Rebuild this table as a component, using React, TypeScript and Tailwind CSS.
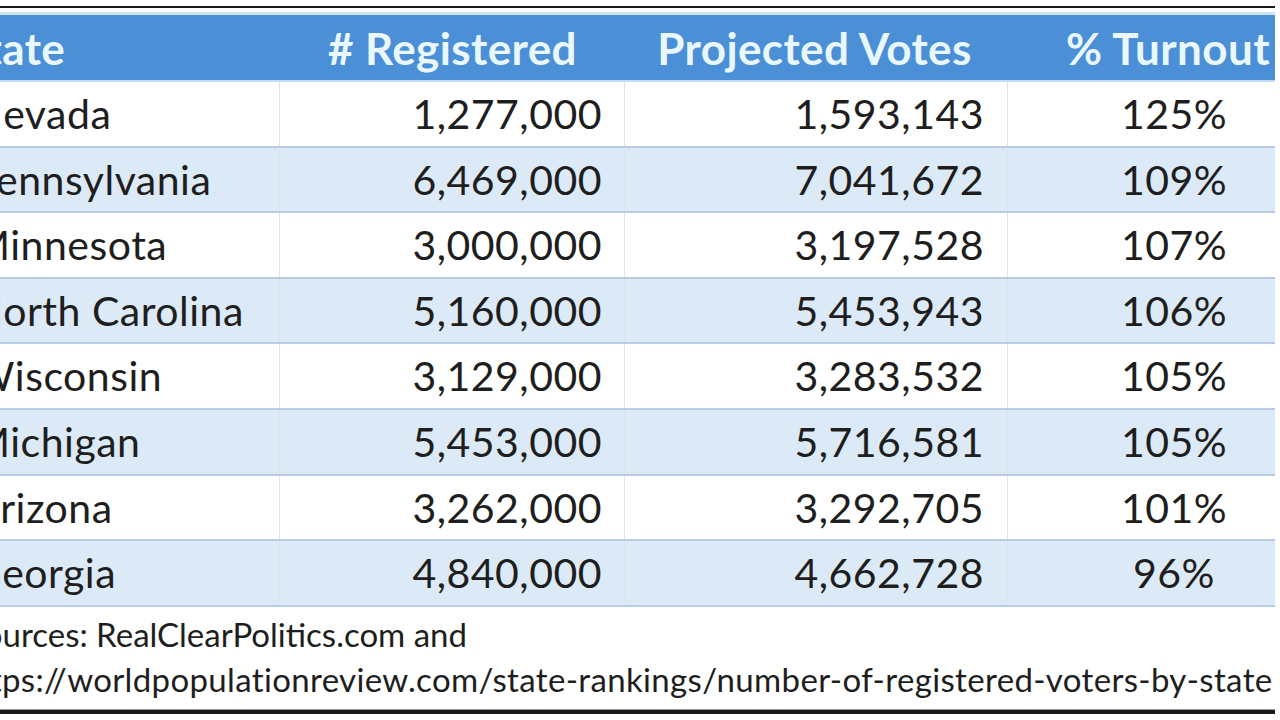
import React from "react";

const rows = [
  ["Nevada", "1,277,000", "1,593,143", "125%"],
  ["Pennsylvania", "6,469,000", "7,041,672", "109%"],
  ["Minnesota", "3,000,000", "3,197,528", "107%"],
  ["North Carolina", "5,160,000", "5,453,943", "106%"],
  ["Wisconsin", "3,129,000", "3,283,532", "105%"],
  ["Michigan", "5,453,000", "5,716,581", "105%"],
  ["Arizona", "3,262,000", "3,292,705", "101%"],
  ["Georgia", "4,840,000", "4,662,728", "96%"],
];

export default function App() {
  return (
    <div
      className="w-[1280px] h-[720px] overflow-hidden bg-white"
      style={{ fontFamily: "Lato, 'Open Sans', sans-serif" }}
    >
      <div className="w-[1275px] h-[720px] overflow-hidden flex flex-col">
        <div className="h-[6px] shrink-0" />
        <div className="h-[2px] bg-[#1a1a1a] shrink-0" />
        <div className="h-[4px] shrink-0" />
        <div className="h-[3px] bg-[#cfe3f5] shrink-0" />
        <div className="ml-[-30px] w-[1370px] shrink-0">
          <div className="grid grid-cols-[310px_345px_383px_332px] h-[67px] bg-[#4b8fd6] text-[#e9f7ff] font-bold text-[44px] tracking-[0.4px] items-center border-b-2 border-[#c4dbf2]">
            <div className="ml-[-8px]">State</div>
            <div className="text-center">#&nbsp;Registered</div>
            <div className="text-center pr-[4px]">Projected Votes</div>
            <div className="text-center pr-[12px]">% Turnout</div>
          </div>
          {rows.map((r, i) => (
            <div
              key={r[0]}
              className={
                "grid grid-cols-[310px_345px_383px_332px] h-[65.6px] items-center text-[41px] tracking-[0.5px] text-[#1e1e1e] border-b-2 border-[#b8cde4] " +
                (i % 2 === 1 ? "bg-[#dce9f6]" : "bg-white")
              }
            >
              <div className="pl-[2px] h-full flex items-center border-r border-[#e2e2e2]">{r[0]}</div>
              <div className="pr-[22px] h-full flex items-center justify-end border-r border-[#e2e2e2]">{r[1]}</div>
              <div className="pr-[23px] h-full flex items-center justify-end border-r border-[#e2e2e2]">{r[2]}</div>
              <div className="text-center">{r[3]}</div>
            </div>
          ))}
          <div className="text-[33px] text-[#1e1e1e] leading-[45px] pt-[5px]">
            <div className="ml-[-4px]">Sources: RealClearPolitics.com and</div>
            <div className="ml-[-11px] tracking-[0.35px]">https://worldpopulationreview.com/state-rankings/number-of-registered-voters-by-state</div>
          </div>
        </div>
        <div className="flex-1" />
        <div className="h-[1px] bg-[#9a9a9a] shrink-0" />
        <div className="h-[4px] bg-[#1a1a1a] shrink-0" />
        <div className="h-[6px] shrink-0" />
      </div>
    </div>
  );
}
